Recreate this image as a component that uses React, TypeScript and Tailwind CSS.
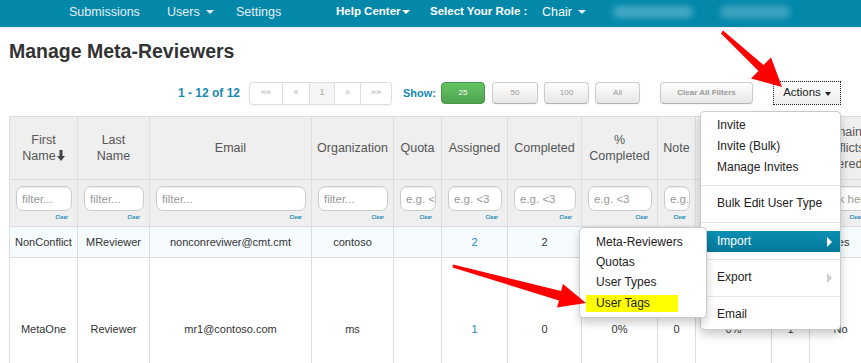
import React from "react";

const SortArrow: React.FC = () => (
	<svg width="8" height="11" viewBox="0 0 8 11" className="inline-block ml-[1px] -mt-[2px] align-middle">
		<path d="M2.5 0h3v6h2.5L4 11 0 6h2.5z" fill="#444" />
	</svg>
);

interface Column {
	label: React.ReactNode;
	filter: string;
}

const columns: Column[] = [
	{ label: <>First<br />Name<SortArrow /></>, filter: "filter..." },
	{ label: <>Last<br />Name</>, filter: "filter..." },
	{ label: "Email", filter: "filter..." },
	{ label: "Organization", filter: "filter..." },
	{ label: "Quota", filter: "e.g. <3" },
	{ label: "Assigned", filter: "e.g. <3" },
	{ label: "Completed", filter: "e.g. <3" },
	{ label: <>%<br />Completed</>, filter: "e.g. <3" },
	{ label: "Note", filter: "e.g. <3" },
	{ label: <>% Bid<br />Completed</>, filter: "e.g. <3" },
	{ label: "Bids", filter: "e.g." },
	{ label: <>Domain<br />Conflicts<br />Entered</>, filter: "click here" },
];

const rows = [
	["NonConflict", "MReviewer", "nonconreviwer@cmt.cmt", "contoso", "", "2", "2", "100%", "0", "0%", "0", "Yes"],
	["MetaOne", "Reviewer", "mr1@contoso.com", "ms", "", "1", "0", "0%", "0", "0%", "1", "No"],
];

const gridCols = "grid grid-cols-[68px_72px_162px_82px_48px_66px_74px_76px_38px_76px_38px_62px]";

const GreyButton: React.FC<{ w: string; children: React.ReactNode; className?: string }> = ({ w, children, className }) => (
	<div
		className={`${w} h-[22px] flex items-center justify-center rounded-[4px] border border-[#ccc] border-b-[#b3b3b3] bg-[linear-gradient(#ffffff,#e6e6e6)] shadow-[0_1px_2px_rgba(0,0,0,0.05)] text-[8px] text-[#999] ${className ?? ""}`}
	>
		{children}
	</div>
);

const MenuItem: React.FC<{ children: React.ReactNode; className?: string }> = ({ children, className }) => (
	<div className={`h-[21px] leading-[21px] pl-[16px] ${className ?? ""}`}>{children}</div>
);

const Caret: React.FC<{ color: string }> = ({ color }) => (
	<span
		className={`absolute right-[8px] top-[6px] w-0 h-0 border-y-[5px] border-y-transparent border-l-[5px] ${color}`}
	/>
);

export default function App() {
	return (
		<div className="relative w-[861px] h-[363px] overflow-hidden bg-white font-['Liberation_Sans',Arial,sans-serif]">
			<nav className="h-[27px] bg-[#0388aa] flex items-center pb-[3px] text-[12.5px] text-[#e6eef2] shadow-[0_1px_3px_rgba(0,0,0,0.12)]">
				<div className="w-[69px] shrink-0" />
				<div className="w-[98px] shrink-0">Submissions</div>
				<div className="w-[69px] shrink-0 flex items-center">
					Users
					<span className="ml-[6px] w-0 h-0 border-x-[4px] border-x-transparent border-t-[4px] border-t-[#e6eef2]" />
				</div>
				<div className="w-[100px] shrink-0">Settings</div>
				<div className="w-[94px] shrink-0 flex items-center font-bold text-[11.5px] text-white">
					Help Center
					<span className="ml-[1px] w-0 h-0 border-x-[4px] border-x-transparent border-t-[4px] border-t-white" />
				</div>
				<div className="w-[112px] shrink-0 font-bold text-[11.5px] text-white">Select Your Role :</div>
				<div className="w-[71px] shrink-0 flex items-center text-white">
					Chair
					<span className="ml-[6px] w-0 h-0 border-x-[4px] border-x-transparent border-t-[4px] border-t-[#e6eef2]" />
				</div>
				<div className="w-[80px] h-[12px] shrink-0 rounded-full bg-[#45a8c4] blur-[3px]" />
				<div className="w-[27px] shrink-0" />
				<div className="w-[70px] h-[12px] shrink-0 rounded-full bg-[#40a4c1] blur-[3px]" />
			</nav>
			<div className="h-[3px] bg-[linear-gradient(#ececec,#ffffff)]" />

			<h1 className="mt-[9px] ml-[9px] h-[24px] leading-[24px] text-[19.5px] font-bold text-[#333]">Manage Meta-Reviewers</h1>

			<div className="mt-[18px] h-[24px] flex items-center">
				<div className="ml-[178px] w-[62px] shrink-0 text-[12px] font-bold text-[#1a8ab5] whitespace-nowrap">1 - 12 of 12</div>
				<div className="ml-[9px] h-[23px] flex rounded-[4px] border border-[#ddd] shadow-[0_1px_2px_rgba(0,0,0,0.05)] text-[9px] text-[#aaa]">
					<div className="w-[32px] flex items-center justify-center">««</div>
					<div className="w-[27px] flex items-center justify-center border-l border-[#ddd]">«</div>
					<div className="w-[25px] flex items-center justify-center border-l border-[#ddd] bg-[#f5f5f5]">1</div>
					<div className="w-[26px] flex items-center justify-center border-l border-[#ddd]">»</div>
					<div className="w-[31px] flex items-center justify-center border-l border-[#ddd]">»»</div>
				</div>
				<div className="ml-[11px] w-[33px] shrink-0 text-[11px] font-bold text-[#1a8ab5]">Show:</div>
				<div className="ml-[5px] w-[44px] h-[22px] flex items-center justify-center rounded-[4px] border border-[#4a944a] bg-[linear-gradient(#62c462,#51a351)] text-[8px] text-white">
					25
				</div>
				<GreyButton w="w-[46px]" className="ml-[7px]">50</GreyButton>
				<GreyButton w="w-[45px]" className="ml-[6px]">100</GreyButton>
				<GreyButton w="w-[45px]" className="ml-[6px]">All</GreyButton>
				<GreyButton w="w-[93px]" className="ml-[20px] font-bold">Clear All Filters</GreyButton>
				<div className="ml-[20px] w-[68px] h-[24px] flex items-center justify-center border border-dotted border-[#222] bg-[linear-gradient(#ffffff,#ececec)] text-[11.5px] text-[#222]">
					Actions
					<span className="ml-[4px] mt-[1px] w-0 h-0 border-x-[3.5px] border-x-transparent border-t-[4px] border-t-[#222]" />
				</div>
			</div>

			<div className="ml-[9px] mt-[11px] w-[873px] border-l border-t border-[#ddd]">
				<div className={`${gridCols} h-[63px] bg-[#efefef]`}>
					{columns.map((c, i) => (
						<div
							key={i}
							className="flex items-center justify-center border-r border-b border-[#ddd] px-[2px] text-center text-[12.5px] leading-[16px] text-[#555]"
						>
							<div>{c.label}</div>
						</div>
					))}
				</div>
				<div className={`${gridCols} h-[47px] bg-[#efefef]`}>
					{columns.map((c, i) => (
						<div key={i} className="border-r border-b border-[#ddd] pl-[6px] pr-[5px] pt-[6px] min-w-0">
							<input
								readOnly
								placeholder={c.filter}
								className="block w-full h-[25px] rounded-[7px] border border-[#ccc] bg-white pl-[5px] text-[11.5px] shadow-[inset_0_1px_1px_rgba(0,0,0,0.075)] placeholder:text-[#999] outline-none"
							/>
							<div className="mt-[3px] pr-[4px] text-right text-[5px] leading-[7px] font-bold text-[#1a8ab5]">Clear</div>
						</div>
					))}
				</div>
				{rows.map((r, ri) => (
					<div key={ri} className={`${gridCols} ${ri === 0 ? "h-[31px] bg-[#f6fbfe]" : "h-[144px] bg-white"}`}>
						{r.map((v, ci) => (
							<div
								key={ci}
								className={`flex items-center justify-center border-r border-b border-[#ddd] whitespace-nowrap overflow-hidden text-[11px] ${ci === 5 ? "text-[#1a8ab5]" : "text-[#333]"}`}
							>
								{v}
							</div>
						))}
					</div>
				))}
			</div>

			<div className="absolute left-[700px] top-[111px] w-[141px] rounded-[5px] border border-black/20 bg-white pt-[3px] pb-[4px] text-[12px] text-[#222] shadow-[0_5px_10px_rgba(0,0,0,0.2)]">
				<MenuItem>Invite</MenuItem>
				<MenuItem>Invite (Bulk)</MenuItem>
				<MenuItem>Manage Invites</MenuItem>
				<div className="mt-[7px] mb-[7px] h-px bg-[#e5e5e5]" />
				<MenuItem>Bulk Edit User Type</MenuItem>
				<div className="mt-[8px] mb-[8px] h-px bg-[#e5e5e5]" />
				<MenuItem className="relative text-white bg-[linear-gradient(#0b8fb3,#04789a)]">
					Import
					<Caret color="border-l-white" />
				</MenuItem>
				<div className="mt-[7px] mb-[7px] h-px bg-[#e5e5e5]" />
				<MenuItem className="relative">
					Export
					<Caret color="border-l-[#ccc]" />
				</MenuItem>
				<div className="mt-[8px] mb-[7px] h-px bg-[#e5e5e5]" />
				<MenuItem>Email</MenuItem>
			</div>

			<div className="absolute left-[579px] top-[227px] w-[128px] rounded-[5px] border border-black/20 bg-white pt-[4px] pb-[5px] text-[12px] text-[#222] shadow-[0_5px_10px_rgba(0,0,0,0.2)]">
				<div className="h-[20px] leading-[20px] pl-[16px]">Meta-Reviewers</div>
				<div className="h-[20px] leading-[20px] pl-[16px]">Quotas</div>
				<div className="h-[20px] leading-[20px] pl-[16px]">User Types</div>
				<div className="h-[20px] pt-[3px] pl-[6px]">
					<div className="w-[92px] h-[17px] leading-[17px] pl-[10px] bg-[#ffff00]">User Tags</div>
				</div>
			</div>

			<svg className="absolute left-0 top-0 pointer-events-none" width="861" height="363" viewBox="0 0 861 363">
				<polygon points="723,30.5 763.5,65 771,57.5 782,87 751,78.5 758.5,71 721,33.5" fill="#ff0000" />
				<polygon points="453,264.5 561,291 563,284 586,303 557,307.5 559,300.5 452.5,267.5" fill="#ff0000" />
			</svg>
		</div>
	);
}
